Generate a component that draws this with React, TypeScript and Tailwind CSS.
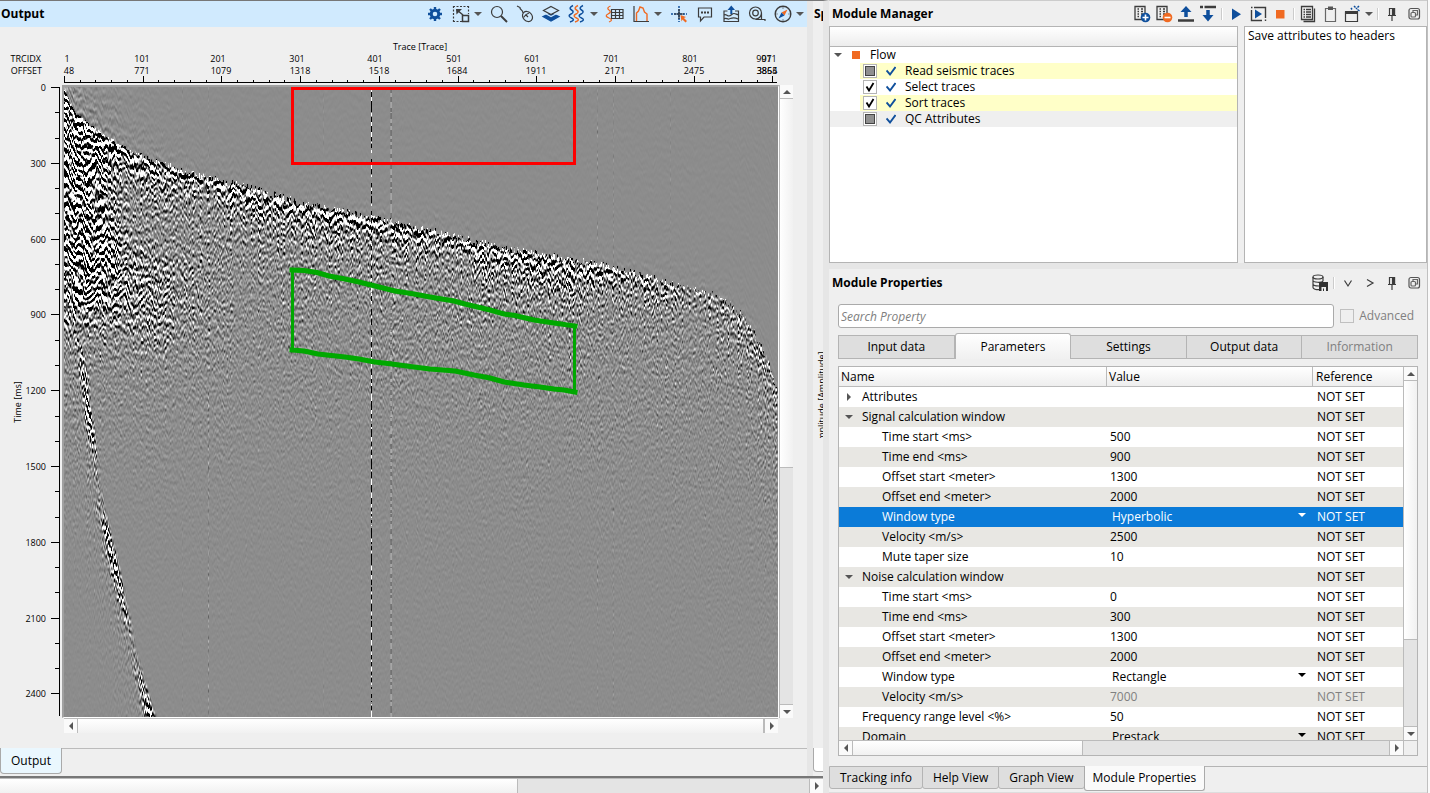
import React, { useLayoutEffect, useRef } from "react";

/* ---------- Seismic section ---------- */

const SECTION_W = 714;
const SECTION_H = 630;

type Point = [number, number];

const FIRST_BREAKS: Point[] = [
  [0, 2], [5, 14], [11, 26], [26, 38], [41, 49], [61, 60], [78, 69], [101, 77], [121, 84], [149, 92],
  [196, 103], [236, 116], [278, 124], [328, 135], [366, 143], [412, 155], [470, 166], [518, 174],
  [570, 185], [620, 200], [650, 208], [666, 217], [680, 230], [689, 243], [703, 272], [714, 306],
];

const GROUND_ROLL: Point[] = [
  [225, 2], [240, 9], [260, 17], [320, 24], [386, 33], [420, 38], [460, 47], [526, 62], [570, 72], [600, 80], [630, 88],
];

function interpolate(points: Point[], at: number): number {
  if (at <= points[0][0]) return points[0][1];
  for (let i = 1; i < points.length; i++) {
    const [x1, y1] = points[i];
    const [x0, y0] = points[i - 1];
    if (at <= x1) return y0 + ((y1 - y0) * (at - x0)) / (x1 - x0);
  }
  return points[points.length - 1][1];
}

function createRandom(seed: number) {
  let s = seed >>> 0;
  return () => {
    s = (s + 0x6d2b79f5) >>> 0;
    let t = s;
    t = Math.imul(t ^ (t >>> 15), t | 1);
    t ^= t + Math.imul(t ^ (t >>> 7), t | 61);
    return ((t ^ (t >>> 14)) >>> 0) / 4294967296;
  };
}

/** Band-limited noise: a wavelet down each trace, a Gaussian mix across traces. */
function bandNoise(seed: number, w: number, h: number, sv: number, sh: number): Float32Array {
  const rnd = createRandom(seed);
  const src = new Float32Array(w * h);
  for (let i = 0; i < src.length; i++) src[i] = rnd() + rnd() + rnd() - 1.5;
  const mid = new Float32Array(w * h);
  const out = new Float32Array(w * h);
  const rv = Math.ceil(sv * 3.5);
  const rh = Math.ceil(sh * 2.5);
  for (let k = -rv; k <= rv; k++) {
    const q = (k * k) / (sv * sv);
    const c = (1 - q) * Math.exp(-q / 2);
    for (let y = Math.max(0, -k); y < Math.min(h, h - k); y++)
      for (let x = 0; x < w; x++) mid[y * w + x] += c * src[(y + k) * w + x];
  }
  for (let k = -rh; k <= rh; k++) {
    const c = Math.exp(-(k * k) / (2 * sh * sh));
    for (let y = 0; y < h; y++)
      for (let x = Math.max(0, -k); x < Math.min(w, w - k); x++) out[y * w + x] += c * mid[y * w + x + k];
  }
  let sum = 0;
  for (let i = 0; i < out.length; i++) sum += out[i] * out[i];
  const norm = 1 / Math.sqrt(sum / out.length);
  for (let i = 0; i < out.length; i++) out[i] *= norm;
  return out;
}

function drawSection(ctx: CanvasRenderingContext2D) {
  const W = SECTION_W;
  const H = SECTION_H;
  const CH = 960;
  const fine = bandNoise(11, W, H, 1.7, 0.6);
  const coherent = bandNoise(23, W, CH, 2.1, 1.4);
  const trace = bandNoise(37, W, H, 2.2, 0.4);
  const rnd = createRandom(5);
  const image = ctx.createImageData(W, H);
  const gain = new Float32Array(W);
  const jitter = new Float32Array(W);
  const statics = new Float32Array(W);
  let walk = 0;
  for (let x = 0; x < W; x++) {
    gain[x] = 0.6 + rnd() * 0.8;
    jitter[x] = (rnd() - 0.5) * 8;
    walk = walk * 0.9 + (rnd() - 0.5) * 3.4;
    statics[x] = walk;
  }
  const roll = new Float32Array(H);
  for (let y = 0; y < H; y++) roll[y] = interpolate(GROUND_ROLL, y);

  for (let x = 0; x < W; x++) {
    const fb = interpolate(FIRST_BREAKS, x);
    const edge = fb + jitter[x] * Math.min(1, 0.25 + x / 200);
    for (let y = 0; y < H; y++) {
      const d = y - edge;
      let v: number;
      const zig = 5 * Math.asin(Math.sin(x / 5 + Math.sin(y / 31) * 1.5 + x * x * 0.0004));
      const yy = y - fb * 0.8 + statics[x] + zig * Math.min(1, Math.max(0.15, d / 30)) + 270;
      const row = Math.floor(yy);
      const f = yy - row;
      const co = coherent[row * W + x] * (1 - f) + coherent[(row + 1) * W + x] * f;
      const fi = fine[y * W + x];
      if (d < 0) {
        const a = 0.012 + 0.34 * Math.exp(-x / 40) * Math.exp(d / 45) + 0.04 * Math.exp(d / 14);
        v = a * (0.8 * co + 0.4 * fi);
      } else {
        const taper = x > 520 ? Math.max(0.28, 1 - (x - 520) / 160) : 1;
        const thick = 22 + 6 * Math.sin(x / 37 + 1) + 5 * Math.sin(x / 13) + (gain[x] - 1) * 12;
        const near = 1.6 * Math.exp(-Math.pow(d / thick, 1.5)) * taper;
        const blobY = y < 185 ? 1 : Math.exp(-Math.pow((y - 185) / 42, 2));
        const reach = 24 + 8 * Math.sin(y / 23);
        const blob = 2.2 * Math.exp(-Math.pow(Math.max(0, x - reach) / 30, 2)) * blobY;
        const along = (x - 84) * 0.6 - (y - 215) * 0.8;
        const across = (x - 84) * 0.8 + (y - 215) * 0.6;
        const tail = 0.7 * Math.exp(-Math.pow(across / 46, 2) - Math.pow(along / 42, 2));
        const patch = 1 + 0.3 * Math.sin(x / 19 + y / 43) * Math.sin(y / 27 - x / 61);
        const mid = 0.36 * Math.exp(-Math.pow(d / 115, 1.4)) * (0.5 + 0.5 * taper) * patch;
        const early = 0.26 * Math.exp(-x / 130) * Math.exp(-Math.pow((y - 220) / 130, 2));
        const deep = 0.075 * Math.exp(-d / 200) + 0.01;
        const a = near + blob + tail + mid + early + deep;
        const mix = Math.min(1, (near + blob + tail) / 1.5);
        v = a * gain[x] * ((0.4 + 0.5 * mix) * co + (0.75 - 0.35 * mix) * fi);
      }
      const off = x - roll[y];
      if (y > 215) {
        const width = y > 380 ? 5.5 : 4;
        const amp = 1.5 * Math.exp(-Math.pow(off / (off < 0 ? width : 2.5), 2)) * (0.6 + 0.5 * Math.sin(y / 26 + 2));
        const trail = off < 0 ? 0.15 * gain[x] * Math.exp(off / 18) : 0;
        v += (Math.max(0, amp) + trail) * trace[y * W + x];
      }
      if (x === 144) v += (d < 0 ? 0.06 : 0.16) * trace[y * W + x];
      if (x === 533 || x === 549) v += 0.07 * trace[y * W + x];
      if (x === 118 || x === 259 || x === 606) v += 0.04 * trace[y * W + x];
      if (x === 326 || x === 327) v = (x === 327 ? 0.2 : 0.14) * Math.sign(trace[y * W + 327]) + v * 0.6;
      if (x === 307) v = trace[y * W + x] > 0.5 ? 1.2 : trace[y * W + x] < 0 ? -1.2 : 0.05;
      const g = Math.max(0, Math.min(255, 140 + v * 128));
      const i = (y * W + x) * 4;
      image.data[i] = g;
      image.data[i + 1] = g;
      image.data[i + 2] = g;
      image.data[i + 3] = 255;
    }
  }
  ctx.putImageData(image, 0, 0);
}

function SeismicSection() {
  const ref = useRef<HTMLCanvasElement>(null);
  useLayoutEffect(() => {
    const ctx = ref.current?.getContext("2d");
    if (ctx) drawSection(ctx);
  }, []);
  return (
    <div className="relative min-h-0 min-w-0 border-t-2 border-l-2 border-r border-b border-t-[#a0a0a0] border-l-[#a0a0a0] border-r-white border-b-white bg-[#8c8c8c]">
      <canvas ref={ref} width={SECTION_W} height={SECTION_H} className="absolute inset-0 h-full w-full" />
      <svg className="absolute inset-0 h-full w-full" viewBox="0 0 714 630" preserveAspectRatio="none" fill="none">
        <rect x="228.5" y="1.5" width="282" height="75" stroke="#fe0000" strokeWidth="3" />
        <path d="M228.500 183v80M510.500 238v67" stroke="#00a800" strokeWidth="3" />
        <path
          d="M228 183L240 183.500L253 185.500L265 189L281 192L295 195L311 199L331 204L350 207L366 210L390 214L401 217L426 223L440 227L451 228.500L470 233L490 236L511 239"
          stroke="#00a800" strokeWidth="5" strokeLinecap="square"
        />
        <path
          d="M228 263L240 264L254 267L281 270L295 272L311 275L328 277L350 280L366 282L391 284L410 288L426 291L440 295L460 298L476 300L490 302L500 303L511 305"
          stroke="#00a800" strokeWidth="5" strokeLinecap="square"
        />
      </svg>
    </div>
  );
}

const TRACE_LABELS: [string, number, string, number][] = [
  ["1", 5, "48", 7], ["101", 80, "771", 80], ["201", 156, "1079", 159], ["301", 235, "1318", 238],
  ["401", 313, "1518", 317], ["501", 392, "1684", 395], ["601", 470, "1911", 474], ["701", 549, "2171", 553],
  ["801", 628, "2475", 632], ["901", 702, "3855", 705], ["971", 707, "3864", 705],
];

function TraceAxis() {
  const minor = Array.from({ length: 46 }, (_, i) => i);
  return (
    <svg className="h-[58px] w-full overflow-visible" fontFamily="Open Sans, Noto Sans, sans-serif" fontSize="9" fill="#000">
      <text x="358" y="23" textAnchor="middle">Trace [Trace]</text>
      <text x="-21" y="35" textAnchor="end">TRCIDX</text>
      <text x="-20" y="47" textAnchor="end">OFFSET</text>
      {TRACE_LABELS.map(([a, ax, b, bx]) => (
        <g key={a} textAnchor="middle">
          <text x={ax} y="35">{a}</text>
          <text x={bx} y="47">{b}</text>
        </g>
      ))}
      <path d="M2 55.500H715" stroke="#000" />
      {minor.map((i) => (
        <path key={i} d={`M${Math.round(i * 15.74) + 2.5} ${i % 5 ? 53 : 49}V56`} stroke="#000" />
      ))}
    </svg>
  );
}

function TimeAxis() {
  const ticks = Array.from({ length: 25 }, (_, i) => i);
  return (
    <svg className="h-full w-[62px] overflow-visible" fontFamily="Open Sans, Noto Sans, sans-serif" fontSize="9" fill="#000">
      <text transform="translate(21 317) rotate(-90)" textAnchor="middle">Time [ms]</text>
      <path d="M59.500 2V631" stroke="#000" />
      {ticks.map((i) => {
        const y = Math.round(i * 25.27) + 2.5;
        return (
          <g key={i}>
            <path d={`M${i % 3 ? 55 : 51} ${y}H60`} stroke="#000" />
            {i % 3 === 0 && <text x="46" y={y + 3} textAnchor="end">{i * 100}</text>}
          </g>
        );
      })}
    </svg>
  );
}

/* ---------- Small shared parts ---------- */

function Arrow({ dir, className = "text-[#555]" }: { dir: "up" | "down" | "left" | "right"; className?: string }) {
  const d = { up: "M0 6L4 2L8 6Z", down: "M0 2L4 6L8 2Z", left: "M6 0L2 4L6 8Z", right: "M2 0L6 4L2 8Z" }[dir];
  return (
    <svg viewBox="0 0 8 8" className={`h-2 w-2 shrink-0 ${className}`} fill="currentColor"><path d={d} /></svg>
  );
}

function VScroll({ thumb }: { thumb: string }) {
  return (
    <div className="flex w-[14px] shrink-0 flex-col border-l border-[#bbb] bg-[#e4e4e4]">
      <button aria-label="Scroll up" className="flex h-[14px] items-center justify-center border-b border-[#bbb] bg-[#fafafa]"><Arrow dir="up" /></button>
      <div className="min-h-0 flex-1">
        <div className={`border-b border-[#bbb] bg-linear-to-r from-white to-[#f1f1f1] ${thumb}`} />
      </div>
      <button aria-label="Scroll down" className="flex h-[14px] items-center justify-center border-t border-[#bbb] bg-[#fafafa]"><Arrow dir="down" /></button>
    </div>
  );
}

function HScroll({ thumb, start = true }: { thumb: string; start?: boolean }) {
  return (
    <div className="flex h-[15px] min-w-0 flex-1 border-t border-[#bbb] bg-[#e4e4e4]">
      {start && (
        <button aria-label="Scroll left" className="flex w-[14px] items-center justify-center border-r border-[#bbb] bg-[#fafafa]"><Arrow dir="left" /></button>
      )}
      <div className="min-w-0 flex-1">
        <div className={`h-full border-r border-[#bbb] bg-linear-to-b from-white to-[#f1f1f1] ${thumb}`} />
      </div>
      <button aria-label="Scroll right" className="flex w-[14px] items-center justify-center border-l border-[#bbb] bg-[#fafafa]"><Arrow dir="right" /></button>
    </div>
  );
}

function Tool({ label, children }: { label: string; children: React.ReactNode }) {
  return (
    <button aria-label={label} className="h-[18px] w-[18px] shrink-0">
      <svg viewBox="0 0 18 18" className="h-[18px] w-[18px] overflow-visible" fill="none" stroke="#3c3c3c" strokeWidth="1.2">{children}</svg>
    </button>
  );
}

const More = ({ label, className = "" }: { label: string; className?: string }) => (
  <button aria-label={label} className={`flex h-[18px] w-2 items-center ${className}`}><Arrow dir="down" /></button>
);

const BLUE = "#0f4f9c";
const ORANGE = "#f06a22";

function OutputToolbar() {
  return (
    <div className="flex shrink-0 items-center gap-2">
      <Tool label="Settings">
        <circle cx="9" cy="9" r="3.800" stroke={BLUE} strokeWidth="3" />
        <path d="M9 2v3M9 13v3M2 9h3M13 9h3M4 4l2 2M12 12l2 2M14 4l-2 2M6 12l-2 2" stroke={BLUE} strokeWidth="2.400" />
      </Tool>
      <Tool label="Fit area">
        <path d="M1 1.500h16M1.500 1v16M16.500 1v8M1 16.500h9" strokeDasharray="2 1.500" />
        <path d="M10.500 10.500h6v6h-6zM11 10L5 5" strokeWidth="1.500" />
        <path d="M4 4h6l-5.500 5.500z" fill="#3c3c3c" stroke="none" />
      </Tool>
      <More label="Area options" className="-ml-1" />
      <Tool label="Zoom">
        <circle cx="7" cy="7" r="5.500" />
        <path d="M11 11l6 6" strokeWidth="2" />
      </Tool>
      <Tool label="Mouse mode">
        <ellipse cx="11.500" cy="11.500" rx="4.500" ry="5.500" transform="rotate(-45 11.500 11.500)" />
        <path d="M7.500 12.500C9 10 11 8.500 13 8M9.500 9.500l2.500 2.500M7 8C7 4.500 3.500 5 4 2.500L1 1" />
      </Tool>
      <Tool label="Layers">
        <path d="M9 8l8 3.500-8 4.500-8-4.500z" fill={BLUE} stroke={BLUE} />
        <path d="M9 1.500l7.500 4L9 9.500l-7.500-4z" fill="#d0eafe" />
        <path d="M1.500 7.500L9 11.500l7.500-4" stroke="#d0eafe" />
      </Tool>
      <Tool label="Wiggle display">
        <path d="M5 0.500q-5 2.500-1.500 4.500t-.5 4 .5 4-1.500 4" stroke={BLUE} strokeWidth="1.500" />
        <path d="M10 0.500q-5 2.500-1.500 4.500t-.5 4 .5 4-1.500 4" stroke={ORANGE} strokeWidth="1.500" />
        <path d="M15 0.500q-5 2.500-1.500 4.500t-.5 4 .5 4-1.500 4" stroke={BLUE} strokeWidth="1.500" />
      </Tool>
      <More label="Wiggle options" className="-ml-1" />
      <Tool label="Trace table">
        <path d="M4.500 1q-4.500 2-1.500 4t-1 4 1 4 0 4" stroke={ORANGE} strokeWidth="1.300" />
        <path d="M5.500 4.500h11.500v9H5.500zM5.500 7.500H17M5.500 10.500H17M9.500 4.500v9M13.500 4.500v9" />
      </Tool>
      <Tool label="Spectrum">
        <path d="M2 1v15.500h15" />
        <path d="M4.500 16V8l2-2 1.500-4 3 1 1.500 4 2.500 2v7" stroke={ORANGE} strokeWidth="1.400" />
      </Tool>
      <More label="Spectrum options" className="-ml-1" />
      <Tool label="Crosshair">
        <path d="M9 1v16" stroke={BLUE} strokeWidth="1.500" strokeDasharray="2 1" />
        <path d="M1 9h16" stroke={BLUE} strokeWidth="1.500" strokeDasharray="2 1" />
        <path d="M9 4v10M4 9h10" stroke="#333" />
        <path d="M10.500 10l5.500 2-2 1 3 3-1.500 1.500-3-3-1 2z" fill={ORANGE} stroke="none" />
      </Tool>
      <Tool label="Comment">
        <path d="M2.500 3h13v9H8l-3.500 4v-4h-2z" />
        <path d="M5 7.500h2M8 7.500h2M11 7.500h2" strokeWidth="1.800" />
      </Tool>
      <Tool label="Export image">
        <path d="M5.500 6H2v10.500h14.500V6H13M2 10c2-1.500 3 1 5 1s3-2.500 5-2.500 3 1.500 4.500 1M2 14c2-2 3 .5 5 0s4-2.500 9 0" />
        <path d="M9.300 9V3.500" stroke={BLUE} strokeWidth="2" />
        <path d="M5.500 5l3.800-4.500L13 5z" fill={BLUE} stroke="none" />
      </Tool>
      <Tool label="Measure">
        <circle cx="7.500" cy="8" r="6" />
        <circle cx="7.500" cy="8" r="2.800" />
        <path d="M7.500 14.500H17v1.500M13.500 8.500V14" />
      </Tool>
      <Tool label="Navigate">
        <circle cx="9" cy="9" r="7.800" strokeWidth="1.400" />
        <path d="M13.500 4.500l-3 6-3-3z" fill={ORANGE} stroke="none" />
        <path d="M4.500 13.500l3-6 3 3z" fill={BLUE} stroke="none" />
        <path d="M9 2.500v1M9 14.500v1M2.500 9h1M14.500 9h1" />
      </Tool>
      <More label="Navigate options" className="-ml-1" />
    </div>
  );
}

const Separator = () => <span className="h-3 w-[2px] border-l border-[#ccc] bg-white" />;

const PinTools = () => (
  <>
    <Tool label="Pin panel">
      <path d="M6.500 3.500h5v7h-5zM5 10.500h8M9 11v5" />
      <path d="M9.500 3.500h2v7h-2z" fill="#3c3c3c" />
    </Tool>
    <Tool label="Float panel">
      <rect x="4" y="3.500" width="10.500" height="10.500" rx="2" stroke="#555" />
      <rect x="6" y="7.500" width="4.500" height="4.500" rx="1" stroke="#666" />
      <path d="M8 7.500V5.500h4.500v4.500h-2" stroke="#666" />
    </Tool>
  </>
);

const Grid = () => (
  <path d="M2 1.500h10v13H2zM4.500 4h1.500M8 4h2M4.500 6.500h1.500M8 6.500h2M4.500 9h1.500M8 9h2M4.500 11.500h1.500" strokeWidth="1.300" />
);

function ModuleToolbar() {
  return (
    <div className="flex shrink-0 items-center gap-1">
      <Tool label="Add module">
        <Grid />
        <circle cx="12.500" cy="12.500" r="4.800" fill={BLUE} stroke="none" />
        <path d="M9.500 12.500h6M12.500 9.500v6" stroke="#fff" strokeWidth="1.600" />
      </Tool>
      <Tool label="Remove module">
        <Grid />
        <circle cx="12.500" cy="12.500" r="4.800" fill={ORANGE} stroke="none" />
        <path d="M9.500 12.500h6" stroke="#fff" strokeWidth="1.600" />
      </Tool>
      <Tool label="Move up">
        <path d="M1 15.500h16" strokeWidth="2.500" />
        <path d="M9 12V5" stroke={BLUE} strokeWidth="3.500" />
        <path d="M3.500 7L9 1l5.500 6z" fill={BLUE} stroke="none" />
      </Tool>
      <Tool label="Move down">
        <path d="M1 2h3M5.500 2H17" strokeWidth="2.500" />
        <path d="M9 5v6" stroke={BLUE} strokeWidth="3.500" />
        <path d="M3.500 10L9 16.500l5.500-6.500z" fill={BLUE} stroke="none" />
      </Tool>
      <Separator />
      <Tool label="Run"><path d="M5 3.500v11.500l9-5.700z" fill={BLUE} stroke="none" /></Tool>
      <Tool label="Run step">
        <path d="M5 2.500h11.500V13M2.500 5v10.500H13M2 2.500h1.500M16.500 14.500v1.500" strokeWidth="1.400" />
        <path d="M6 4.500v9l7-4.500z" fill={BLUE} stroke="none" />
      </Tool>
      <Tool label="Stop"><path d="M5 5h8.500v8.500H5z" fill={ORANGE} stroke="none" /></Tool>
      <Separator />
      <Tool label="Copy">
        <path d="M2.500 1.500h11v13h-11zM15.500 3.500v13h-11" strokeWidth="1.300" />
        <path d="M4.500 4.500h1.500M7 4.500h5M4.500 7h1.500M7 7h5M4.500 9.500h1.500M7 9.500h5M4.500 12h1.500M7 12h5" strokeWidth="1.400" />
      </Tool>
      <Tool label="Paste">
        <path d="M4.500 3.500h10v13h-10z" stroke="#666" />
        <path d="M7 1.500h5V5H7z" fill="#555" stroke="none" />
      </Tool>
      <Tool label="New window">
        <path d="M2.500 7h12v9.500h-12z" />
        <path d="M2 7.500h13" strokeWidth="3" />
        <path d="M11 1l1.500 1.500M16 1l-1.500 1.500M14.500 4.500L16.500 6M9 4.500L8 3M13 3l1 1" stroke={BLUE} strokeWidth="1.500" />
      </Tool>
      <More label="Window options" />
      <Separator />
      <PinTools />
    </div>
  );
}

/* ---------- Output panel ---------- */

function OutputPanel() {
  return (
    <section className="flex min-w-0 flex-1 flex-col">
      <header className="flex h-[26px] shrink-0 items-center justify-between bg-[#d0eafe] pr-[3px] pl-px">
        <h2 className="font-bold">Output</h2>
        <OutputToolbar />
      </header>
      <div className="grid min-h-0 flex-1 grid-cols-[62px_1fr_14px_14px] grid-rows-[58px_1fr_15px_15px]">
        <div />
        <TraceAxis />
        <div className="col-span-2" />
        <TimeAxis />
        <SeismicSection />
        <VScroll thumb="h-[61%]" />
        <div />
        <div />
        <div className="flex pr-px pl-[2px]"><HScroll thumb="w-full" /></div>
      </div>
      <div className="h-7 shrink-0 border-t border-[#bbb]">
        <button className="-mt-px h-[26px] rounded-b border border-t-0 border-[#aaa] bg-[#eaf7fe] px-[10px]">Output</button>
      </div>
    </section>
  );
}

function SpectrumPanel() {
  return (
    <section className="flex w-[10px] shrink-0 flex-col overflow-hidden bg-[#efefef]">
      <header className="h-[26px] shrink-0 pl-px leading-[26px] font-bold">Spectrum</header>
      <div className="flex min-h-0 flex-1 items-center justify-start">
        <svg className="h-[100px] w-[10px]" fontFamily="Open Sans, sans-serif" fontSize="9">
          <text transform="translate(12 61) rotate(-90)" textAnchor="middle">Amplitude [Amplitude]</text>
        </svg>
      </div>
      <div className="mb-1 h-6 w-5 shrink-0 rounded-b border border-t-0 border-[#aaa] bg-white" />
    </section>
  );
}

/* ---------- Module manager ---------- */

type Module = { name: string; state: "partial" | "on"; row: string };

const MODULES: Module[] = [
  { name: "Read seismic traces", state: "partial", row: "bg-[#ffffc8]" },
  { name: "Select traces", state: "on", row: "bg-white" },
  { name: "Sort traces", state: "on", row: "bg-[#ffffc8]" },
  { name: "QC Attributes", state: "partial", row: "bg-[#efefef]" },
];

function ModuleManager() {
  return (
    <section className="flex h-[262px] shrink-0 flex-col">
      <header className="flex h-[25px] shrink-0 items-center justify-between pr-1 pl-[3px]">
        <h2 className="font-bold">Module Manager</h2>
        <ModuleToolbar />
      </header>
      <div className="grid min-h-0 flex-1 grid-cols-[409fr_183fr] gap-[6px]">
        <div className="border border-[#b4b4b4] bg-white">
          <div className="h-5 border-b border-[#b4b4b4] bg-linear-to-b from-white to-[#ededed]" />
          <ul>
            <li className="flex h-4 items-center pl-1">
              <button aria-label="Collapse Flow"><Arrow dir="down" className="text-[#555]" /></button>
              <span className="mr-[10px] ml-[10px] h-2 w-2 bg-[#f06a22]" />
              Flow
            </li>
            {MODULES.map((m) => (
              <li key={m.name} className={m.name === "QC Attributes" ? "bg-[#efefef]" : ""}>
                <label className={`ml-[30px] flex h-4 items-center pl-[3px] ${m.row}`}>
                  <input type="checkbox" defaultChecked={m.state === "on"} className="peer sr-only" />
                  <svg viewBox="0 0 14 14" className="h-[14px] w-[14px]" fill="none">
                    <rect x=".5" y=".5" width="13" height="13" fill="#fff" stroke="#b4b4b4" />
                    {m.state === "on" ? (
                      <path d="M3.500 6.500l2.500 4L10.500 3" stroke="#000" strokeWidth="1.800" />
                    ) : (
                      <rect x="2.500" y="2.500" width="9" height="9" fill="#909090" stroke="#444" />
                    )}
                  </svg>
                  <svg viewBox="0 0 10 10" className="mr-[9px] ml-[9px] h-[10px] w-[10px]" fill="none">
                    <path d="M0.500 4.500L4 8.500L9.500 1" stroke={BLUE} strokeWidth="1.900" />
                  </svg>
                  {m.name}
                </label>
              </li>
            ))}
          </ul>
        </div>
        <div className="border border-[#b4b4b4] bg-white pt-px pl-[3px] leading-4">Save attributes to headers</div>
      </div>
    </section>
  );
}

/* ---------- Module properties ---------- */

type Property = {
  name: string;
  value?: string;
  level: 0 | 1;
  toggle?: "open" | "closed";
  select?: boolean;
  selected?: boolean;
  disabled?: boolean;
};

const PROPERTIES: Property[] = [
  { name: "Attributes", level: 0, toggle: "closed" },
  { name: "Signal calculation window", level: 0, toggle: "open" },
  { name: "Time start <ms>", value: "500", level: 1 },
  { name: "Time end <ms>", value: "900", level: 1 },
  { name: "Offset start <meter>", value: "1300", level: 1 },
  { name: "Offset end <meter>", value: "2000", level: 1 },
  { name: "Window type", value: "Hyperbolic", level: 1, select: true, selected: true },
  { name: "Velocity <m/s>", value: "2500", level: 1 },
  { name: "Mute taper size", value: "10", level: 1 },
  { name: "Noise calculation window", level: 0, toggle: "open" },
  { name: "Time start <ms>", value: "0", level: 1 },
  { name: "Time end <ms>", value: "300", level: 1 },
  { name: "Offset start <meter>", value: "1300", level: 1 },
  { name: "Offset end <meter>", value: "2000", level: 1 },
  { name: "Window type", value: "Rectangle", level: 1, select: true },
  { name: "Velocity <m/s>", value: "7000", level: 1, disabled: true },
  { name: "Frequency range level <%>", value: "50", level: 0 },
  { name: "Domain", value: "Prestack", level: 0, select: true },
];

function PropertyRow({ p, index }: { p: Property; index: number }) {
  const tone = p.selected
    ? "bg-[#0b7bd8] text-white"
    : index % 2
      ? "bg-[#e8e7e3] text-black"
      : "bg-white text-black";
  const dim = p.disabled ? "text-[#808080]" : "";
  return (
    <tr className={`h-5 ${tone}`}>
      <td className="p-0">
        <div className={`flex h-5 items-center ${p.level ? "pl-[43px]" : "pl-[6px]"}`}>
          {p.toggle && (
            <button aria-label={`Toggle ${p.name}`} className="mr-[9px]">
              <Arrow dir={p.toggle === "open" ? "down" : "right"} />
            </button>
          )}
          <span className={!p.toggle && !p.level ? "ml-[17px]" : ""}>{p.name}</span>
        </div>
      </td>
      <td className="p-0">
        {p.select ? (
          <div className="relative flex h-5 items-center">
            <select aria-label={p.name} className="h-[18px] w-full appearance-none bg-transparent pl-[5px] outline-none">
              <option>{p.value}</option>
            </select>
            <span className="pointer-events-none absolute right-[7px] top-1">
              <Arrow dir="down" className="text-current" />
            </span>
          </div>
        ) : (
          <div className={`pl-[3px] ${dim}`}>{p.value}</div>
        )}
      </td>
      <td className={`p-0 pl-1 ${dim}`}>NOT SET</td>
    </tr>
  );
}

const TABS = ["Input data", "Parameters", "Settings", "Output data", "Information"];
const VIEWS = ["Tracking info", "Help View", "Graph View", "Module Properties"];

function ModuleProperties() {
  return (
    <section className="flex min-h-0 flex-1 flex-col bg-[#efefef]">
      <header className="flex h-7 shrink-0 items-center justify-between pr-1 pl-[3px]">
        <h2 className="font-bold">Module Properties</h2>
        <div className="flex items-center gap-1">
          <Tool label="Save to database">
            <ellipse cx="7" cy="3" rx="5" ry="2" />
            <path d="M2 3v10.500c0 1.500 3 2.300 6 2.200M12 3v4M2 6.500c0 2 9 2.500 10 .5M2 10c0 1.500 3 2 6 2" />
            <path d="M8 8h9v9H8z" fill="#333" stroke="none" />
            <path d="M10.500 13h4.500v4h-2v-2.500h-1V17h-1.500z" fill="#efefef" stroke="none" />
          </Tool>
          <Separator />
          <Tool label="Collapse all"><path d="M5.500 6.500L9 12l3.500-5.500" /></Tool>
          <Tool label="Expand all"><path d="M6 5.500L12 9l-6 3.500" /></Tool>
          <PinTools />
        </div>
      </header>
      <div className="flex min-h-0 flex-1 flex-col px-[9px]">
        <div className="mt-[7px] flex h-6 shrink-0 items-center">
          <input
            aria-label="Search Property"
            placeholder="Search Property"
            className="h-6 min-w-0 flex-1 rounded-[3px] border border-[#aaa] bg-white px-[2px] placeholder:text-[#808080] placeholder:italic"
          />
          <label className="ml-[6px] flex items-center gap-[5px] pr-1 text-[#808080]">
            <input type="checkbox" disabled className="h-[14px] w-[14px] appearance-none border border-[#c0c0c0] bg-[#efefef]" />
            Advanced
          </label>
        </div>
        <div role="tablist" className="mt-[5px] flex h-[26px] shrink-0 items-end">
          {TABS.map((t) => (
            <button
              key={t}
              role="tab"
              aria-selected={t === "Parameters"}
              className={
                t === "Parameters"
                  ? "h-[26px] flex-1 rounded-t-[3px] border border-b-0 border-[#b4b4b4] bg-linear-to-b from-white to-[#f0f0f0]"
                  : `-ml-px h-6 flex-1 border border-[#b4b4b4] bg-[#dedede] first:ml-0 ${t === "Information" ? "text-[#808080]" : ""}`
              }
            >
              {t}
            </button>
          ))}
        </div>
        <div className="mt-[7px] flex min-h-0 flex-1 flex-col border border-[#b4b4b4] bg-white">
          <div className="flex min-h-0 flex-1">
            <div className="min-w-0 flex-1 overflow-hidden">
              <table className="w-full table-fixed border-separate border-spacing-0">
                <colgroup>
                  <col className="w-[268px]" />
                  <col />
                  <col className="w-[90px]" />
                </colgroup>
                <thead>
                  <tr className="h-5 bg-linear-to-b from-white to-[#ededed] text-left">
                    <th className="border-r border-b border-[#bbb] p-0 pl-[2px] font-normal">Name</th>
                    <th className="border-r border-b border-[#bbb] p-0 pl-[2px] font-normal">Value</th>
                    <th className="border-b border-[#bbb] p-0 pl-[3px] font-normal">Reference</th>
                  </tr>
                </thead>
                <tbody>
                  {PROPERTIES.map((p, i) => (
                    <PropertyRow key={i} p={p} index={i} />
                  ))}
                </tbody>
              </table>
            </div>
            <VScroll thumb="h-[75%]" />
          </div>
          <div className="flex">
            <HScroll thumb="w-[43%]" />
            <div className="w-[14px] border-t border-l border-[#bbb] bg-[#efefef]" />
          </div>
        </div>
      </div>
      <div className="mt-[10px] flex h-[27px] shrink-0 items-start border-b border-[#ddd]">
        {VIEWS.map((v, i) => (
          <button
            key={v}
            className={
              i === 3
                ? "h-[25px] rounded-b-[3px] border border-t-0 border-[#aaa] bg-[#fafafa] px-2"
                : "-mr-px h-[23px] rounded-b-[3px] border border-[#b4b4b4] bg-[#dedede] px-[10px]"
            }
          >
            {v}
          </button>
        ))}
        <div className="flex-1 border-t border-[#b4b4b4]" />
      </div>
    </section>
  );
}

export default function App() {
  return (
    <div className="grid h-screen min-h-[640px] grid-cols-[829fr_598fr_3px] overflow-hidden bg-[#efefef] font-['Open_Sans','Noto_Sans',sans-serif] text-[12px] leading-4 text-black">
      <div className="flex min-w-0 flex-col border-t border-r-[6px] border-t-[#777] border-r-[#e6e6e6]">
        <div className="flex min-h-0 flex-1">
          <OutputPanel />
          <div className="w-[6px] shrink-0 bg-[#e6e6e6]" />
          <SpectrumPanel />
        </div>
        <div className="flex shrink-0 border-t-2 border-[#777]"><HScroll thumb="w-[64%]" start={false} /></div>
      </div>
      <div className="flex min-h-0 min-w-0 flex-col border-t border-[#ccc]">
        <ModuleManager />
        <div className="h-[6px] shrink-0 bg-[#e6e6e6]" />
        <ModuleProperties />
      </div>
      <div className="border-l border-[#c0c0c0] bg-[#fafafa]" />
    </div>
  );
}
